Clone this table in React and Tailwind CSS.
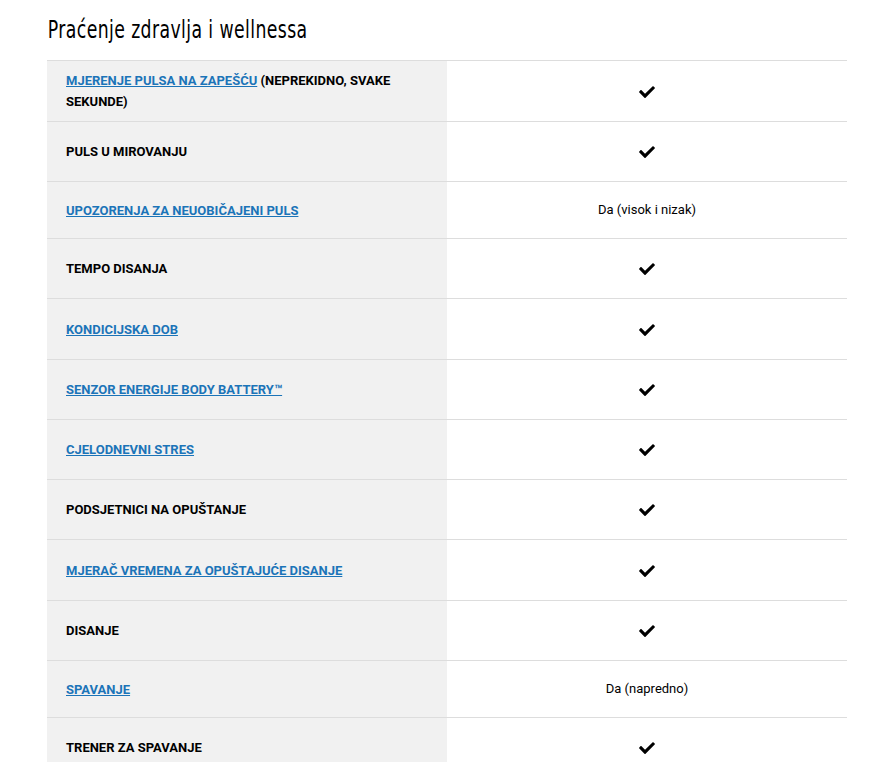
import React from 'react'

function Check() {
  return (
    <svg width="16" height="13" viewBox="0 0 512 420" fill="#000" aria-hidden="true">
      <path d="M173.9 411.4L7.5 245c-10-10-10-26.2 0-36.2l36.2-36.2c10-10 26.2-10 36.2 0L192 284.7 432.1 44.6c10-10 26.2-10 36.2 0l36.2 36.2c10 10 10 26.2 0 36.2L210.1 411.4c-10 10-26.2 10-36.2 0z" />
    </svg>
  )
}

const rows = [
  { link: 'MJERENJE PULSA NA ZAPEŠĆU', rest: ' (NEPREKIDNO, SVAKE SEKUNDE)', h: 'h-[61px]' },
  { text: 'PULS U MIROVANJU', h: 'h-[60px]' },
  { link: 'UPOZORENJA ZA NEUOBIČAJENI PULS', value: 'Da (visok i nizak)', h: 'h-[57px]' },
  { text: 'TEMPO DISANJA', h: 'h-[60px]' },
  { link: 'KONDICIJSKA DOB', h: 'h-[61px]' },
  { link: 'SENZOR ENERGIJE BODY BATTERY™', h: 'h-[60px]' },
  { link: 'CJELODNEVNI STRES', h: 'h-[60px]' },
  { text: 'PODSJETNICI NA OPUŠTANJE', h: 'h-[60px]' },
  { link: 'MJERAČ VREMENA ZA OPUŠTAJUĆE DISANJE', h: 'h-[61px]' },
  { text: 'DISANJE', h: 'h-[60px]' },
  { link: 'SPAVANJE', value: 'Da (napredno)', h: 'h-[57px]' },
  { text: 'TRENER ZA SPAVANJE', h: 'h-[60px]' },
]

export default function App() {
  return (
    <div className="bg-white min-h-[762px] px-[47px] pt-[14px] text-black" style={{ fontFamily: 'Roboto, "Liberation Sans", sans-serif' }}>
      <h2
        className="text-[24px] leading-[32px] tracking-[0.5px] pl-[1px] mb-[14px] inline-block scale-x-80 origin-left whitespace-nowrap"
        style={{ fontFamily: '"DejaVu Sans Condensed", "Liberation Sans", sans-serif' }}
      >
        Praćenje zdravlja i wellnessa
      </h2>

      <div className="w-[800px] border-t border-[#dddddd]">
        {rows.map((r, i) => (
          <div key={i} className={`grid grid-cols-2 border-b border-[#dddddd] ${r.h}`}>
            <div className="bg-[#f1f1f1] pl-[19px] pr-[40px] flex items-center text-[13px] leading-[21px] font-bold">
              <span>
                {r.link ? (
                  <a href="#" className="text-[#1b74b8] underline">{r.link}</a>
                ) : (
                  r.text
                )}
                {r.rest}
              </span>
            </div>
            <div className="flex items-center justify-center text-[13px]">
              {r.value ? <span>{r.value}</span> : <Check />}
            </div>
          </div>
        ))}
      </div>
    </div>
  )
}
